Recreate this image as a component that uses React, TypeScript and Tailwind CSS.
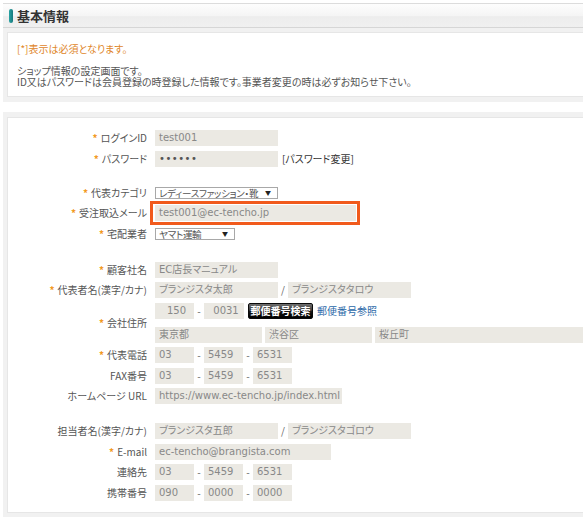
import React from "react";

const inputBase =
  "h-[16px] bg-[#ebe9e3] text-[#888] text-[10px] leading-[16px] pl-[4px] whitespace-nowrap overflow-hidden font-['DejaVu_Sans','Noto_Sans_CJK_JP',sans-serif]";

function Input({ w, children, center }: { w: string; children?: React.ReactNode; center?: boolean }) {
  return <div className={`${inputBase} ${w} ${center ? "text-center pl-0" : ""}`}>{children}</div>;
}

function Sep({ ch = "-" }: { ch?: string }) {
  return <div className="w-[10px] h-[16px] text-center text-[#666] text-[10px] leading-[16px]">{ch}</div>;
}

function Row({
  label,
  req,
  children,
  tall,
}: {
  label: string;
  req?: boolean;
  children?: React.ReactNode;
  tall?: boolean;
}) {
  return (
    <div className={`flex items-center ${tall ? "" : "h-[16px]"}`}>
      <div className="w-[139px] h-[16px] text-right whitespace-nowrap leading-[16px] overflow-visible">
        {req && <span className="text-[#f29a1f] mr-[3px] font-bold">*</span>}
        {label}
      </div>
      <div className="ml-[8px] flex items-center leading-[16px]">{children}</div>
    </div>
  );
}

function Select({ w, text }: { w: string; text: string }) {
  return (
    <div
      className={`h-[12px] ${w} border border-[#a8a8a8] bg-white flex items-center justify-between pl-[3px] pr-[6px] text-[#555] whitespace-nowrap`}
    >
      <span className="text-[9.5px] leading-[10px] tracking-[-0.3px]">{text}</span>
      <span className="text-[6px] leading-[10px] text-[#222]">▼</span>
    </div>
  );
}

function Phone({ a, b, c }: { a: string; b: string; c: string }) {
  return (
    <>
      <Input w="w-[39px]">{a}</Input>
      <Sep />
      <Input w="w-[39px]">{b}</Input>
      <Sep />
      <Input w="w-[39px]">{c}</Input>
    </>
  );
}

export default function App() {
  return (
    <div className="w-[583px] h-[523px] overflow-hidden bg-white font-['Noto_Sans_CJK_JP',sans-serif] [font-feature-settings:'palt'] text-[10px] text-[#555]">
      <div className="w-[620px] pt-[3px] pl-[3px]">
        {/* header */}
        <div className="h-[25px] border-t border-b border-t-[#dcdcdc] border-b-[#d6d6d6] bg-[linear-gradient(to_bottom,#fdfdfd,#f5f5f5_50%,#ededed_55%,#f0f0f0)] flex items-center pl-[6px] gap-[4px]">
          <div className="w-[4px] h-[14px] rounded-[2px] bg-[linear-gradient(to_right,#2aa3a3,#177a7d)]" />
          <div className="text-[13px] font-bold text-[#333] leading-none">基本情報</div>
        </div>

        {/* panel 1 */}
        <div className="bg-[#f1f1f1] pt-[4px] pl-[4px] pb-[5px]">
          <div className="bg-white border border-[#e6e6e6] pt-[10px] pb-[9px] pl-[9px] leading-[11px]">
            <div className="text-[#e0862a]">[*]表示は必須となります。</div>
            <div className="h-[11px]" />
            <div>ショップ情報の設定画面です。</div>
            <div>ID又はパスワードは会員登録の時登録した情報です。事業者変更の時は必ずお知らせ下さい。</div>
          </div>
        </div>

        <div className="h-[10px]" />

        {/* panel 2 */}
        <div className="bg-[#f1f1f1] pt-[5px] pl-[4px] pb-[4px]">
          <div className="bg-white border border-[#e6e6e6] pt-[12px] pb-[11px] flex flex-col gap-[4.5px]">
            <Row label="ログインID" req>
              <Input w="w-[123px]">test001</Input>
            </Row>
            <Row label="パスワード" req>
              <Input w="w-[123px]">
                <span className="text-[#555] tracking-[0.5px]">••••••</span>
              </Input>
              <span className="ml-[4px] text-[#333]">[パスワード変更]</span>
            </Row>
            <div className="h-[9px]" />
            <Row label="代表カテゴリ" req>
              <Select w="w-[123px]" text="レディースファッション・靴" />
            </Row>
            <Row label="受注取込メール" req>
              <div className="relative">
                <Input w="w-[201px]">test001@ec-tencho.jp</Input>
                <div className="absolute -left-[5px] -right-[4px] -top-[4px] -bottom-[4px] border-[3px] border-[#f15a1c]" />
              </div>
            </Row>
            <Row label="宅配業者" req>
              <Select w="w-[80px]" text="ヤマト運輸" />
            </Row>
            <div className="h-[11px]" />
            <Row label="顧客社名" req>
              <Input w="w-[123px]">EC店長マニュアル</Input>
            </Row>
            <Row label="代表者名(漢字/カナ)" req>
              <Input w="w-[123px]">ブランジスタ太郎</Input>
              <Sep ch="/" />
              <Input w="w-[123px]">ブランジスタタロウ</Input>
            </Row>
            <Row label="会社住所" req tall>
              <div className="flex flex-col">
                <div className="flex items-center h-[16px]">
                  <Input w="w-[39px]" center>
                    150
                  </Input>
                  <Sep />
                  <Input w="w-[40px]" center>
                    0031
                  </Input>
                  <div className="ml-[4px] h-[16px] w-[65px] rounded-[2px] border border-[#0a0a0a] bg-[linear-gradient(to_bottom,#707070,#3a3a3a_45%,#141414_55%,#000)] text-white font-bold text-[10px] flex items-center justify-center leading-none">
                    郵便番号検索
                  </div>
                  <span className="ml-[4px] text-[#2b68a8]">郵便番号参照</span>
                </div>
                <div className="flex items-center gap-[3px] mt-[8px] h-[16px]">
                  <Input w="w-[107px]">東京都</Input>
                  <Input w="w-[107px]">渋谷区</Input>
                  <Input w="w-[220px]">桜丘町</Input>
                </div>
              </div>
            </Row>
            <Row label="代表電話" req>
              <Phone a="03" b="5459" c="6531" />
            </Row>
            <Row label="FAX番号">
              <Phone a="03" b="5459" c="6531" />
            </Row>
            <Row label="ホームページ URL">
              <Input w="w-[187px]">https://www.ec-tencho.jp/index.html</Input>
            </Row>
            <div className="h-[10px]" />
            <Row label="担当者名(漢字/カナ)">
              <Input w="w-[123px]">ブランジスタ五郎</Input>
              <Sep ch="/" />
              <Input w="w-[123px]">ブランジスタゴロウ</Input>
            </Row>
            <Row label="E-mail" req>
              <Input w="w-[176px]">ec-tencho@brangista.com</Input>
            </Row>
            <Row label="連絡先">
              <Phone a="03" b="5459" c="6531" />
            </Row>
            <Row label="携帯番号">
              <Phone a="090" b="0000" c="0000" />
            </Row>
          </div>
        </div>
      </div>
    </div>
  );
}
